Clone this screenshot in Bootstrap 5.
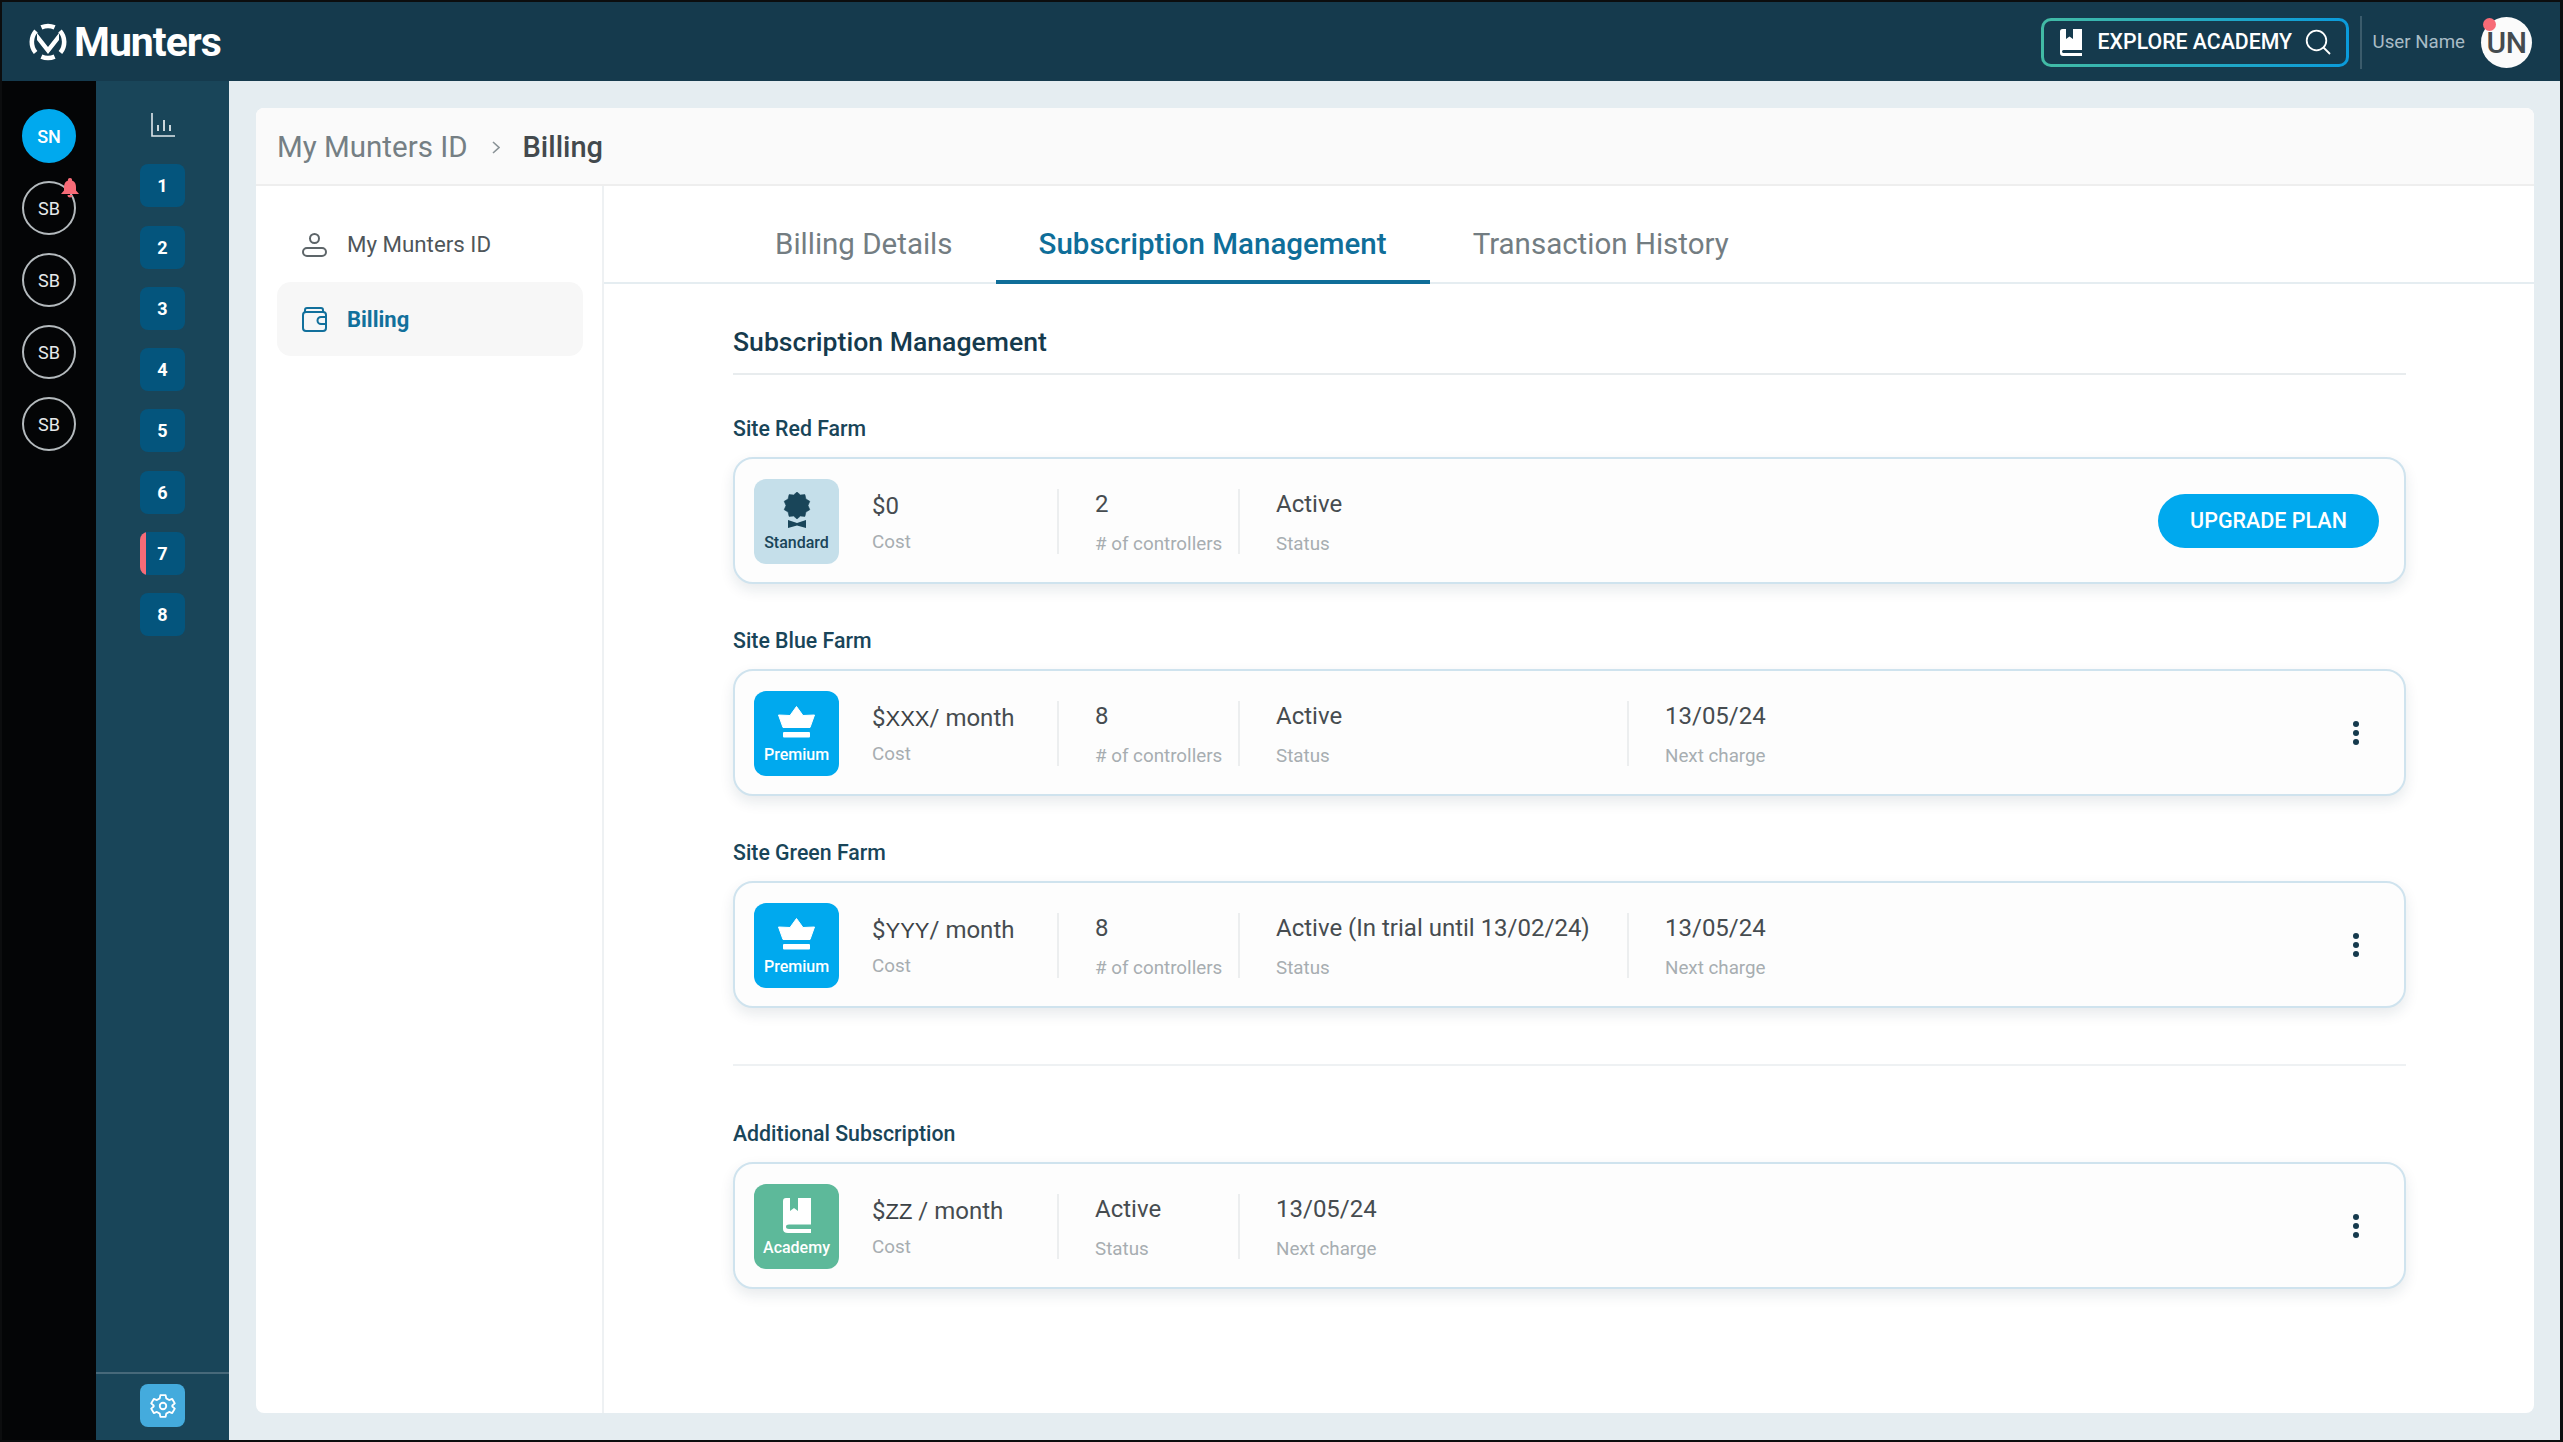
<!DOCTYPE html>
<html lang="en">
<head>
<meta charset="utf-8">
<title>Billing</title>
<link href="https://cdn.jsdelivr.net/npm/bootstrap@5.3.0/dist/css/bootstrap.min.css" rel="stylesheet">
<style>
html,body{height:100%;margin:0}
body{font-family:Roboto,"Liberation Sans",sans-serif;background:#e5edf1;overflow:hidden}
.app-frame{height:1442px;width:2563px;border:2px solid #0c0d0e;border-right-width:3px;display:flex;flex-direction:column}
.top-strip{height:79px;background:#153a4d;flex:none;padding:1px 28px 0 27px}
.logo-word{font-size:41px;font-weight:700;color:#fff;letter-spacing:-1px;line-height:1;margin-left:7px}
.academy-btn{width:308px;height:49px;border-radius:10px;border:3px solid transparent;background:linear-gradient(#153a4d,#153a4d) padding-box,linear-gradient(90deg,#42bba5,#0a9bdc) border-box;color:#fff;font-size:21.3px;font-weight:500;padding:0 15px 0 16px}
.top-sep{width:2px;height:53px;background:#3b5b6b;margin:0 11px}
.user-label{font-size:18.7px;color:#a9bcc6;margin-right:16px}
.user-avatar{width:51px;height:51px;border-radius:50%;background:#fbfbfb;color:#454b4f;font-size:30px;font-weight:500;letter-spacing:-.5px}
.user-dot{top:1px;left:2px;width:13px;height:13px;border-radius:50%;background:#f76b77}
.work-row{flex:1;min-height:0}
.site-rail{width:94px;background:#040506;flex:none;padding-top:28px;gap:18px}
.site-dot{width:54px;height:54px;border-radius:50%;border:2px solid #b4babd;color:#e6e9ea;font-size:18px;font-weight:400;position:relative}
.site-dot.is-on{background:#00a9ee;border-color:#00a9ee;color:#fff;font-weight:500}
.site-bell{position:absolute;top:-5px;right:-6px}
.house-rail{width:133px;background:#194559;flex:none}
.house-list{padding-top:32px;gap:18.3px}
.house-first{margin-top:9px}
.house-btn{width:45px;height:43px;border-radius:8px;background:#04557d;color:#fff;font-size:18px;font-weight:700;overflow:hidden;position:relative;flex:none}
.house-flag{position:absolute;left:0;top:0;bottom:0;width:6px;background:#f76b77}
.house-foot{border-top:2px solid #47697a;height:68px;padding-bottom:3px}
.gear-btn{width:45px;height:43px;border-radius:8px;background:#44abdd}
.main-area{flex:1;min-width:0;padding:27px 26px 27px 27px}
.panel{height:100%;background:#fff;border-radius:8px;overflow:hidden}
.crumb-bar{height:78px;background:#fafafa;border-bottom:2px solid #eeeeee;padding:3px 0 0 21px;font-size:29.5px;flex:none}
.crumb-link{color:#757f84}
.crumb-now{color:#43494d;font-weight:500;font-size:29px}
.crumb-sep{margin:0 23px 0 24px}
.side-menu{width:348px;border-right:2px solid #eef1f3;padding:22px 0 0 21px;flex:none}
.side-item{width:306px;height:74px;padding-left:25px;font-size:22.3px;color:#4f565a;border-radius:14px;gap:20px}
.side-item.is-on{background:#f7f7f7;color:#12709c;font-weight:700;font-size:22px}
.tab-strip{height:98px;border-bottom:2px solid #e5edf1;padding-left:129px;font-size:29.5px;flex:none}
.tab-item{padding:23px 43px 0;color:#737d82;height:98px;border-bottom:4px solid transparent;margin-bottom:-2px}
.tab-item.is-on{color:#0f6e99;font-weight:500;border-bottom-color:#0f6e99}
.tab-item:first-child{padding-left:42px}
.sub-body{padding:40px 128px 0 129px;color:#153a4d}
.sub-title{font-size:26.6px;font-weight:500;line-height:36px;padding-bottom:13px;border-bottom:2px solid #e8ecee;margin:0 0 39px}
.sub-site{font-size:21.3px;font-weight:500;line-height:28px;color:#194559;margin:0 0 15px;padding-top:1px;height:28px}
.sub-row{height:127px;border:2px solid #cfe3ee;border-radius:20px;background:#fdfdfd;box-shadow:0 6px 14px rgba(20,50,70,.1);padding:1px 25px 0 19px;margin-bottom:42px}
.sub-row.is-last{margin-bottom:0}
.sub-tile{width:85px;height:85px;border-radius:12px;flex:none;margin-right:33px;font-size:16px;font-weight:500;line-height:18px;padding:8px 0 12px}
.tile-mark{flex:1;display:flex;align-items:center;justify-content:center}
.tile-standard{background:#c5dfea;color:#194559}
.tile-premium{background:#00a9ee;color:#fff}
.tile-academy{background:#5db99a;color:#fff}
.sub-cell{height:65px;justify-content:space-between;flex:none;border-left:2px solid #eceeef;padding-left:36px;width:181px}
.sub-cell.first-cell{border-left:0;padding:2px 0;width:185px}
.sub-cell.wide-cell{width:389px}
.val-text{font-size:24px;line-height:30px;color:#464c50;white-space:nowrap}
.val-alt{font-family:"Liberation Sans",sans-serif;color:#3b4145;font-size:22px}
.cap-text{font-size:18.8px;line-height:20px;color:#a7adb1;white-space:nowrap}
.upgrade-btn{width:221px;height:54px;border-radius:27px;background:#00a9ee;color:#fff;font-size:21.5px;font-weight:500;border:0}
.more-dots{width:6px;gap:3.2px;margin-right:20px}
.more-dots i{display:block;width:6px;height:6px;border-radius:50%;background:#153a4d}
.sub-rule{height:2px;background:#eef1f3;margin:56px 0 53px}
</style>
</head>
<body>
<div class="app-frame">
  <header class="top-strip d-flex align-items-center">
    <svg width="38" height="38" viewBox="0 0 38 38" aria-hidden="true"><g fill="none" stroke="#fff" stroke-width="4.6"><path d="M12.4 4.4A16.5 16.5 0 0 1 25.6 4.4"/><path d="M31 8A16.5 16.5 0 0 1 31.4 29.5"/><path d="M25.6 33.6A16.5 16.5 0 0 1 12.4 33.6"/><path d="M6.6 29.5A16.5 16.5 0 0 1 7 8"/></g><path d="M8 10L19 24L30 10V17L19 31L8 17Z" fill="#fff"/></svg>
    <span class="logo-word">Munters</span>
    <div class="ms-auto d-flex align-items-center">
      <div class="academy-btn d-flex align-items-center">
        <svg width="22" height="27" viewBox="0 0 22 27" aria-hidden="true" class="me-3 flex-none"><path fill="#fff" d="M2.5 0H6V10L9.5 7.5L13 10V0H22V21H3.5Q2 21 2 22.6T3.5 24H22V27H3Q0 27 0 24V2.5Q0 0 2.5 0Z"/></svg>
        <span class="flex-grow-1 text-nowrap">EXPLORE ACADEMY</span>
        <svg width="26" height="26" viewBox="0 0 26 26" aria-hidden="true"><circle cx="11.5" cy="11.5" r="9.8" fill="none" stroke="#fff" stroke-width="1.8"/><path d="M18.5 18.5L25 25" stroke="#fff" stroke-width="1.8" fill="none"/></svg>
      </div>
      <span class="top-sep"></span>
      <span class="user-label">User Name</span>
      <div class="user-avatar d-flex align-items-center justify-content-center position-relative">UN<span class="user-dot position-absolute"></span></div>
    </div>
  </header>
  <div class="work-row d-flex">
    <nav class="site-rail d-flex flex-column align-items-center">
      <div class="site-dot is-on d-flex align-items-center justify-content-center">SN</div>
      <div class="site-dot d-flex align-items-center justify-content-center">SB
        <svg class="site-bell" width="20" height="20" viewBox="0 0 20 20" aria-hidden="true"><path fill="#f76b77" d="M10 0A2 2 0 0 1 12 2.4C15 3.4 16 6 16 9V12.5L19 16H1L4 12.5V9C4 6 5 3.4 8 2.4A2 2 0 0 1 10 0ZM7.5 17H12.5A2.5 2.5 0 0 1 7.5 17Z"/></svg>
      </div>
      <div class="site-dot d-flex align-items-center justify-content-center">SB</div>
      <div class="site-dot d-flex align-items-center justify-content-center">SB</div>
      <div class="site-dot d-flex align-items-center justify-content-center">SB</div>
    </nav>
    <nav class="house-rail d-flex flex-column align-items-center">
      <div class="house-list d-flex flex-column align-items-center flex-grow-1">
        <svg width="24" height="24" viewBox="0 0 24 24" aria-hidden="true"><path d="M1 0V23H24" fill="none" stroke="#dfe7eb" stroke-width="1.6"/><path d="M7 12V18M13 7V18M19 12V18" fill="none" stroke="#dfe7eb" stroke-width="1.8"/></svg>
        <div class="house-btn house-first d-flex align-items-center justify-content-center">1</div>
        <div class="house-btn d-flex align-items-center justify-content-center">2</div>
        <div class="house-btn d-flex align-items-center justify-content-center">3</div>
        <div class="house-btn d-flex align-items-center justify-content-center">4</div>
        <div class="house-btn d-flex align-items-center justify-content-center">5</div>
        <div class="house-btn d-flex align-items-center justify-content-center">6</div>
        <div class="house-btn d-flex align-items-center justify-content-center"><span class="house-flag"></span>7</div>
        <div class="house-btn d-flex align-items-center justify-content-center">8</div>
      </div>
      <div class="house-foot w-100 d-flex justify-content-center align-items-center">
        <div class="gear-btn d-flex align-items-center justify-content-center">
          <svg width="26" height="26" viewBox="0 0 24 24" aria-hidden="true"><path fill="none" stroke="#fff" stroke-width="1.7" stroke-linejoin="round" d="M9.6 2H14.4L15 5L17.6 6.5L20.5 5.5L22.9 9.6L20.6 11.6V12.4L22.9 14.4L20.5 18.5L17.6 17.5L15 19L14.4 22H9.6L9 19L6.4 17.5L3.5 18.5L1.1 14.4L3.4 12.4V11.6L1.1 9.6L3.5 5.5L6.4 6.5L9 5Z"/><circle cx="12" cy="12" r="3" fill="none" stroke="#fff" stroke-width="1.7"/></svg>
        </div>
      </div>
    </nav>
    <main class="main-area">
      <div class="panel d-flex flex-column">
        <div class="crumb-bar d-flex align-items-center">
          <span class="crumb-link">My Munters ID</span>
          <svg class="crumb-sep" width="8" height="13" viewBox="0 0 8 13" aria-hidden="true"><path d="M1 1L7 6.5L1 12" fill="none" stroke="#8a9397" stroke-width="1.6"/></svg>
          <span class="crumb-now">Billing</span>
        </div>
        <div class="d-flex flex-grow-1">
          <aside class="side-menu">
            <div class="side-item d-flex align-items-center">
              <svg width="25" height="24" viewBox="0 0 25 24" aria-hidden="true"><circle cx="12.5" cy="5.5" r="4.5" fill="none" stroke="#5d6569" stroke-width="2"/><rect x="1" y="15" width="23" height="8" rx="4" fill="none" stroke="#5d6569" stroke-width="2"/></svg>
              My Munters ID
            </div>
            <div class="side-item is-on d-flex align-items-center">
              <svg width="25" height="25" viewBox="0 0 25 25" aria-hidden="true"><g fill="none" stroke="#12709c" stroke-width="2"><path d="M3 5V3Q3 1 5 1H19Q21 1 21 3V5"/><rect x="1" y="5" width="23" height="19" rx="3"/><path d="M24 10H19A3.5 3.5 0 0 0 19 17H24"/></g></svg>
              Billing
            </div>
          </aside>
          <section class="flex-grow-1 d-flex flex-column">
            <div class="tab-strip d-flex">
              <div class="tab-item d-flex align-items-center">Billing Details</div>
              <div class="tab-item is-on d-flex align-items-center">Subscription Management</div>
              <div class="tab-item d-flex align-items-center">Transaction History</div>
            </div>
            <div class="sub-body">
              <h2 class="sub-title">Subscription Management</h2>

              <h3 class="sub-site">Site Red Farm</h3>
              <div class="sub-row d-flex align-items-center">
                <div class="sub-tile tile-standard d-flex flex-column align-items-center">
                  <div class="tile-mark"><svg width="28" height="36" viewBox="0 0 28 36" aria-hidden="true"><path fill="#194559" stroke="#194559" stroke-width=".6" stroke-linejoin="round" d="M14 0L17.4 3L21.9 2.6L22.9 7L26.8 9.3L25 13.5L26.8 17.7L22.9 20L21.9 24.4L17.4 24L14 27L10.6 24L6.1 24.4L5.1 20L1.2 17.7L3 13.5L1.2 9.3L5.1 7L6.1 2.6L10.6 3Z"/><path fill="#194559" d="M5 28L14 31L23 28V36L14 33.5L5 36Z"/></svg></div>
                  <span>Standard</span>
                </div>
                <div class="sub-cell first-cell d-flex flex-column"><span class="val-text">$0</span><span class="cap-text">Cost</span></div>
                <div class="sub-cell d-flex flex-column"><span class="val-text">2</span><span class="cap-text"># of controllers</span></div>
                <div class="sub-cell d-flex flex-column"><span class="val-text">Active</span><span class="cap-text">Status</span></div>
                <button type="button" class="upgrade-btn ms-auto">UPGRADE PLAN</button>
              </div>

              <h3 class="sub-site">Site Blue Farm</h3>
              <div class="sub-row d-flex align-items-center">
                <div class="sub-tile tile-premium d-flex flex-column align-items-center">
                  <div class="tile-mark"><svg width="37" height="32" viewBox="0 0 37 32" aria-hidden="true"><path fill="#fff" stroke="#fff" stroke-linejoin="round" d="M18.5 .5L25 9.5L36.5 9L32 21.5H5L.5 9L12 9.5Z"/><rect x="5" y="26" width="27" height="5.5" rx="1" fill="#fff"/></svg></div>
                  <span>Premium</span>
                </div>
                <div class="sub-cell first-cell d-flex flex-column"><span class="val-text">$<span class="val-alt">XXX</span>/ month</span><span class="cap-text">Cost</span></div>
                <div class="sub-cell d-flex flex-column"><span class="val-text">8</span><span class="cap-text"># of controllers</span></div>
                <div class="sub-cell wide-cell d-flex flex-column"><span class="val-text">Active</span><span class="cap-text">Status</span></div>
                <div class="sub-cell d-flex flex-column"><span class="val-text">13/05/24</span><span class="cap-text">Next charge</span></div>
                <div class="more-dots ms-auto d-flex flex-column"><i></i><i></i><i></i></div>
              </div>

              <h3 class="sub-site">Site Green Farm</h3>
              <div class="sub-row is-last d-flex align-items-center">
                <div class="sub-tile tile-premium d-flex flex-column align-items-center">
                  <div class="tile-mark"><svg width="37" height="32" viewBox="0 0 37 32" aria-hidden="true"><path fill="#fff" stroke="#fff" stroke-linejoin="round" d="M18.5 .5L25 9.5L36.5 9L32 21.5H5L.5 9L12 9.5Z"/><rect x="5" y="26" width="27" height="5.5" rx="1" fill="#fff"/></svg></div>
                  <span>Premium</span>
                </div>
                <div class="sub-cell first-cell d-flex flex-column"><span class="val-text">$<span class="val-alt">YYY</span>/ month</span><span class="cap-text">Cost</span></div>
                <div class="sub-cell d-flex flex-column"><span class="val-text">8</span><span class="cap-text"># of controllers</span></div>
                <div class="sub-cell wide-cell d-flex flex-column"><span class="val-text">Active (In trial until 13/02/24)</span><span class="cap-text">Status</span></div>
                <div class="sub-cell d-flex flex-column"><span class="val-text">13/05/24</span><span class="cap-text">Next charge</span></div>
                <div class="more-dots ms-auto d-flex flex-column"><i></i><i></i><i></i></div>
              </div>

              <div class="sub-rule"></div>

              <h3 class="sub-site">Additional Subscription</h3>
              <div class="sub-row is-last d-flex align-items-center">
                <div class="sub-tile tile-academy d-flex flex-column align-items-center">
                  <div class="tile-mark"><svg width="28" height="35" viewBox="0 0 28 35" aria-hidden="true"><path fill="#fff" d="M3 0H7V13L11 10L15 13V0H28V26.5H6Q3 26.5 3 28.7T6 31H28V35H5Q0 35 0 31V3Q0 0 3 0Z"/></svg></div>
                  <span>Academy</span>
                </div>
                <div class="sub-cell first-cell d-flex flex-column"><span class="val-text">$<span class="val-alt">ZZ</span> / month</span><span class="cap-text">Cost</span></div>
                <div class="sub-cell d-flex flex-column"><span class="val-text">Active</span><span class="cap-text">Status</span></div>
                <div class="sub-cell d-flex flex-column"><span class="val-text">13/05/24</span><span class="cap-text">Next charge</span></div>
                <div class="more-dots ms-auto d-flex flex-column"><i></i><i></i><i></i></div>
              </div>
            </div>
          </section>
        </div>
      </div>
    </main>
  </div>
</div>
<script src="https://cdn.jsdelivr.net/npm/bootstrap@5.3.0/dist/js/bootstrap.bundle.min.js"></script>
</body>
</html>
